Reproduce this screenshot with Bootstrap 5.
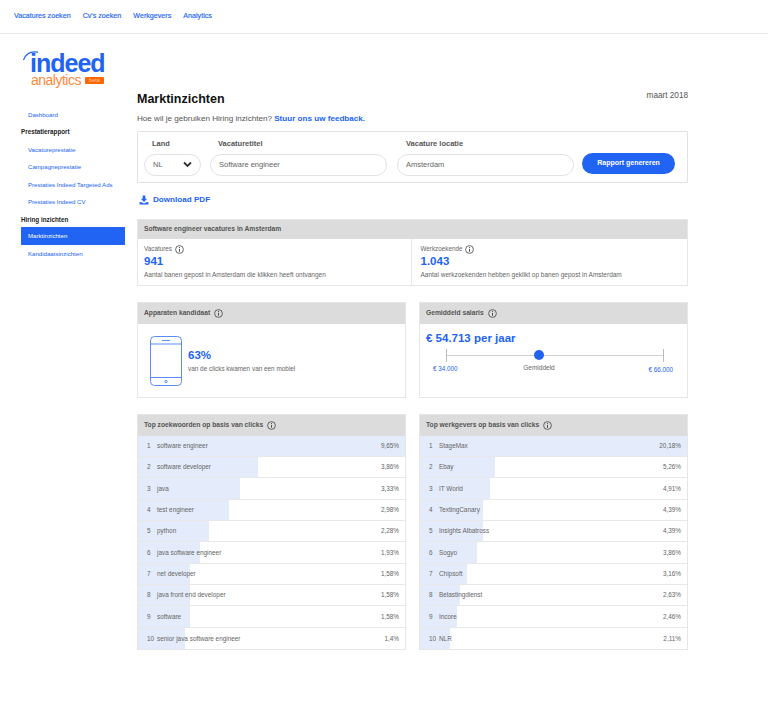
<!DOCTYPE html>
<html lang="nl">
<head>
<meta charset="utf-8">
<title>Marktinzichten</title>
<link href="https://cdn.jsdelivr.net/npm/bootstrap@5.3.0/dist/css/bootstrap.min.css" rel="stylesheet">
<style>
:root{--ib:#2164f3;}
html,body{height:703px;overflow:hidden}
body{font-family:"Liberation Sans",Arial,sans-serif;background:#fff;color:#555;font-size:7px}
.topbar{height:34px;border-bottom:1px solid #e9e9e9;padding:0 14px;gap:12px;justify-content:flex-start}
.topbar a{font-size:7.15px;color:var(--ib);text-decoration:none;padding:0;-webkit-text-stroke:.15px var(--ib)}
.shell{padding-left:21px;width:688px}
.sidebar{width:104px;flex:none;margin-right:12px}
.logo-area{height:71.75px;padding-left:3px;padding-top:18px}
.logo-mark{position:relative;width:82px;display:block}
.logo-arc{position:absolute;left:-1px;top:-2px}
.logo-word{color:var(--ib);font-size:25px;font-weight:700;line-height:22px;letter-spacing:-1px;padding-left:6px;display:block;height:22px}
.logo-sub{display:flex;align-items:center;gap:4px;padding-left:7px;height:14px;margin-top:-1px}
.logo-an{color:#ff8a3c;font-size:14px;line-height:14px;letter-spacing:-.5px}
.logo-beta{background:#f60;color:#ffc9a3;font-size:5.5px;line-height:7px;width:19px;text-align:center;border-radius:1px;margin-top:1px}
.side-list .list-group-item{border:0;padding:0 7px;height:17.5px;line-height:17.5px;font-size:6.1px;color:var(--ib);background:none;white-space:nowrap;border-radius:0}
.side-list .side-head{padding:0;color:#222;font-weight:700;font-size:6.3px}
.side-list .list-group-item.active{background:var(--ib);color:#fff;height:18px;line-height:18px}
.content{width:551px;flex:none;padding-top:57px}
.ttl-row{height:16px;margin-bottom:6px}
.ttl{font-size:12.5px;font-weight:700;color:#111;margin:0;line-height:16px}
.ttl-date{font-size:8.2px;color:#555;line-height:10px}
.intro{font-size:8.1px;line-height:11px;color:#555;margin:0 0 7px}
.intro a{color:var(--ib);font-weight:700;text-decoration:none}
.filter-box{border:1px solid #e2e2e2;border-radius:1px;height:52px;padding:7px 12px 0 6px;gap:9px;margin-bottom:11px}
.fld-lbl{font-size:7.5px;font-weight:700;color:#555;margin:0 0 5px 8px;line-height:10px;display:block;height:10px}
.fld-land{width:57px;flex:none}
.fld-title{width:177px;flex:none;margin-right:1px}
.fld-loc{width:177px;flex:none;margin-right:-1px}
.fld-loc .fld-lbl{margin-left:9px}
.pill{height:21.500px;border:1px solid #e2e2e2;border-radius:11px;font-size:7.5px;color:#666;padding:0 8px;box-shadow:none;min-height:0;line-height:19.500px}
.form-select.pill{background-size:9px 7px;background-position:right 8px center;padding-right:20px;
background-image:url("data:image/svg+xml,%3csvg xmlns='http://www.w3.org/2000/svg' viewBox='0 0 9 7'%3e%3cpath fill='none' stroke='%23333' stroke-width='1.8' d='M1 1.5l3.5 3.5L8 1.5'/%3e%3c/svg%3e")}
.btn-gen{background:var(--ib);color:#fff;border:0;border-radius:11px;height:21px;width:93px;flex:none;font-size:7px;font-weight:700;padding:0;margin-top:14px}
.dl-row{font-size:8.1px;font-weight:700;color:var(--ib);text-decoration:none;height:12px;line-height:12px;gap:4px;padding-left:2px;margin-bottom:13px}
.panel{border:1px solid #e6e6e6;border-radius:0;overflow:hidden}
.panel .card-header{background:#dcdcdc;border:0;border-radius:0;color:#555;font-weight:700;font-size:6.7px;padding:0 6px;display:flex;align-items:center;gap:4px}
.hd-a{height:19px}
.hd-b{height:21px}
.panel-a{height:67px;margin-bottom:16px}
.stat{flex:1 1 0;padding:4.500px 6px 0;font-size:6.3px;line-height:10px;color:#666}
.stat+.stat{border-left:1px solid #e6e6e6;padding-left:9px}
.stat-num{color:var(--ib);font-size:11.500px;font-weight:700;line-height:13px}
.stat-sub{font-size:6.5px;line-height:9px;margin-top:2px;white-space:nowrap}
.stat-lbl{display:flex;align-items:center;gap:3px;height:11px}
.two-col{gap:13px}
.two-col>.panel{flex:1 1 0;min-width:0}
.panel-b{height:96px;margin-bottom:16px}
.device{padding:12px 12px 0;gap:6px;align-items:center}
.dev-pct{font-size:11.500px;font-weight:700;color:var(--ib);line-height:13px}
.dev-txt{font-size:6.4px;line-height:9px;color:#666;margin-top:2px}
.sal{padding:6px 6px 0}
.sal-big{font-size:11.500px;font-weight:700;color:var(--ib);line-height:16px}
.slider-track{position:relative;height:14px;margin:3px 19.500px 0;width:218px}
.slider-line{position:absolute;left:0;right:0;top:5.500px;height:1.500px;background:#d0d0d0}
.tick{position:absolute;top:0;width:1px;height:13px;background:#bbb}
.dot{position:absolute;left:88px;top:1px;width:10px;height:10px;border-radius:50%;background:var(--ib)}
.sal-labels{font-size:6.3px;line-height:9px;color:var(--ib);padding:1px 8px 0 7px}
.sal-labels .mid{color:#666;margin-top:-1px;margin-right:28px;font-size:6.5px}
.sal-labels .hi{margin-top:1px}
.panel-c{height:236px}
.rank{list-style:none;margin:0;padding:0}
.rank li{display:flex;align-items:center;height:21.330px;border-bottom:1px solid #e8e8e8;font-size:6.4px;color:#666;padding:0 6px 0 9px;background-image:linear-gradient(#e4ebfa,#e4ebfa);background-repeat:no-repeat}
.rank li:last-child{border-bottom:0}
.r-n{width:10px;flex:none;white-space:nowrap}
.r-t{flex:1;white-space:nowrap}
</style>
</head>
<body>
<nav class="navbar topbar d-flex align-items-center">
  <a class="nav-link" href="#">Vacatures zoeken</a>
  <a class="nav-link" href="#">Cv's zoeken</a>
  <a class="nav-link" href="#">Werkgevers</a>
  <a class="nav-link" href="#">Analytics</a>
</nav>
<div class="d-flex shell">
  <aside class="sidebar">
    <div class="logo-area">
      <span class="logo-mark">
        <svg class="logo-arc" width="20" height="12" viewBox="0 0 20 12"><path d="M.7 9.500C3 4 8 1 14.500 2.200" fill="none" stroke="#2164f3" stroke-width="1.300" stroke-linecap="round"/></svg>
        <span class="logo-word">indeed</span>
        <span class="logo-sub"><span class="logo-an">analytics</span><span class="logo-beta">beta</span></span>
      </span>
    </div>
    <div class="list-group side-list">
      <a class="list-group-item" href="#">Dashboard</a>
      <div class="list-group-item side-head">Prestatierapport</div>
      <a class="list-group-item" href="#">Vacatureprestatie</a>
      <a class="list-group-item" href="#">Campagneprestatie</a>
      <a class="list-group-item" href="#">Prestaties Indeed Targeted Ads</a>
      <a class="list-group-item" href="#">Prestaties Indeed CV</a>
      <div class="list-group-item side-head">Hiring inzichten</div>
      <a class="list-group-item active" href="#">Marktinzichten</a>
      <a class="list-group-item" href="#">Kandidaatsinzichten</a>
    </div>
  </aside>
  <main class="content">
    <div class="d-flex justify-content-between align-items-start ttl-row">
      <h1 class="ttl">Marktinzichten</h1>
      <div class="ttl-date">maart 2018</div>
    </div>
    <p class="intro">Hoe wil je gebruiken Hiring inzichten? <a href="#">Stuur ons uw feedback.</a></p>
    <div class="d-flex filter-box">
      <div class="fld-land"><label class="fld-lbl">Land</label>
        <select class="form-select pill"><option>NL</option></select></div>
      <div class="fld-title"><label class="fld-lbl">Vacaturetitel</label>
        <input class="form-control pill" value="Software engineer"></div>
      <div class="fld-loc"><label class="fld-lbl">Vacature locatie</label>
        <input class="form-control pill" value="Amsterdam"></div>
      <button class="btn btn-gen" type="button">Rapport genereren</button>
    </div>
    <a class="d-flex align-items-center dl-row" href="#">
      <svg width="10" height="10" viewBox="0 0 10 10"><path fill="#2164f3" d="M3.700 0.500h2.600v3.300h1.900L5 7 1.800 3.800h1.900zM0.500 7.300h2.200L5 8.600l2.300-1.300h2.200v2.200H.5z"/></svg>
      Download PDF
    </a>
    <section class="card panel panel-a">
      <div class="card-header hd-a">Software engineer vacatures in Amsterdam</div>
      <div class="d-flex flex-grow-1">
        <div class="stat">
          <div class="stat-lbl">Vacatures <svg width="9" height="9" viewBox="0 0 9 9"><circle cx="4.500" cy="4.500" r="3.900" fill="none" stroke="#444" stroke-width=".8"/><path d="M4.500 2v1M4.500 3.800v3" stroke="#444" stroke-width=".9"/></svg></div>
          <div class="stat-num">941</div>
          <div class="stat-sub">Aantal banen gepost in Amsterdam die klikken heeft ontvangen</div>
        </div>
        <div class="stat">
          <div class="stat-lbl">Werkzoekende <svg width="9" height="9" viewBox="0 0 9 9"><circle cx="4.500" cy="4.500" r="3.900" fill="none" stroke="#444" stroke-width=".8"/><path d="M4.500 2v1M4.500 3.800v3" stroke="#444" stroke-width=".9"/></svg></div>
          <div class="stat-num">1.043</div>
          <div class="stat-sub">Aantal werkzoekenden hebben geklikt op banen gepost in Amsterdam</div>
        </div>
      </div>
    </section>
    <div class="d-flex two-col">
      <section class="card panel panel-b">
        <div class="card-header hd-b">Apparaten kandidaat <svg width="9" height="9" viewBox="0 0 9 9"><circle cx="4.500" cy="4.500" r="3.900" fill="none" stroke="#444" stroke-width=".8"/><path d="M4.500 2v1M4.500 3.800v3" stroke="#444" stroke-width=".9"/></svg></div>
        <div class="d-flex device">
          <svg width="32" height="50" viewBox="0 0 32 50" fill="none" stroke="#5a8cf5" stroke-width="1"><rect x=".5" y=".5" width="31" height="49" rx="4"/><path d="M.5 8h31M.5 41.500h31M12 4.500h8"/><circle cx="16" cy="45.500" r="1.200"/></svg>
          <div><div class="dev-pct">63%</div><div class="dev-txt">van de clicks kwamen van een mobiel</div></div>
        </div>
      </section>
      <section class="card panel panel-b">
        <div class="card-header hd-b">Gemiddeld salaris <svg width="9" height="9" viewBox="0 0 9 9"><circle cx="4.500" cy="4.500" r="3.900" fill="none" stroke="#444" stroke-width=".8"/><path d="M4.500 2v1M4.500 3.800v3" stroke="#444" stroke-width=".9"/></svg></div>
        <div class="sal">
          <div class="sal-big">€ 54.713 per jaar</div>
          <div class="slider-track"><span class="slider-line"></span><span class="tick" style="left:0"></span><span class="tick" style="left:217px"></span><span class="dot"></span></div>
          <div class="d-flex justify-content-between align-items-start sal-labels"><span>€ 34.000</span><span class="mid">Gemiddeld</span><span class="hi">€ 66.000</span></div>
        </div>
      </section>
    </div>
    <div class="d-flex two-col">
      <section class="card panel panel-c">
        <div class="card-header hd-b">Top zoekwoorden op basis van clicks <svg width="9" height="9" viewBox="0 0 9 9"><circle cx="4.500" cy="4.500" r="3.900" fill="none" stroke="#444" stroke-width=".8"/><path d="M4.500 2v1M4.500 3.800v3" stroke="#444" stroke-width=".9"/></svg></div>
        <ul class="rank">
          <li style="background-size:269px 100%"><span class="r-n">1</span><span class="r-t">software engineer</span><span>9,65%</span></li>
          <li style="background-size:120px 100%"><span class="r-n">2</span><span class="r-t">software developer</span><span>3,86%</span></li>
          <li style="background-size:102px 100%"><span class="r-n">3</span><span class="r-t">java</span><span>3,33%</span></li>
          <li style="background-size:91px 100%"><span class="r-n">4</span><span class="r-t">test engineer</span><span>2,98%</span></li>
          <li style="background-size:71px 100%"><span class="r-n">5</span><span class="r-t">python</span><span>2,28%</span></li>
          <li style="background-size:62px 100%"><span class="r-n">6</span><span class="r-t">java software engineer</span><span>1,93%</span></li>
          <li style="background-size:52px 100%"><span class="r-n">7</span><span class="r-t">net developer</span><span>1,58%</span></li>
          <li style="background-size:52px 100%"><span class="r-n">8</span><span class="r-t">java front end developer</span><span>1,58%</span></li>
          <li style="background-size:52px 100%"><span class="r-n">9</span><span class="r-t">software</span><span>1,58%</span></li>
          <li style="background-size:47px 100%"><span class="r-n">10</span><span class="r-t">senior java software engineer</span><span>1,4%</span></li>
        </ul>
      </section>
      <section class="card panel panel-c">
        <div class="card-header hd-b">Top werkgevers op basis van clicks <svg width="9" height="9" viewBox="0 0 9 9"><circle cx="4.500" cy="4.500" r="3.900" fill="none" stroke="#444" stroke-width=".8"/><path d="M4.500 2v1M4.500 3.800v3" stroke="#444" stroke-width=".9"/></svg></div>
        <ul class="rank">
          <li style="background-size:269px 100%"><span class="r-n">1</span><span class="r-t">StageMax</span><span>20,18%</span></li>
          <li style="background-size:75px 100%"><span class="r-n">2</span><span class="r-t">Ebay</span><span>5,26%</span></li>
          <li style="background-size:70px 100%"><span class="r-n">3</span><span class="r-t">IT World</span><span>4,91%</span></li>
          <li style="background-size:63px 100%"><span class="r-n">4</span><span class="r-t">TextingCanary</span><span>4,39%</span></li>
          <li style="background-size:63px 100%"><span class="r-n">5</span><span class="r-t">Insights Albatross</span><span>4,39%</span></li>
          <li style="background-size:57px 100%"><span class="r-n">6</span><span class="r-t">Sogyo</span><span>3,86%</span></li>
          <li style="background-size:47px 100%"><span class="r-n">7</span><span class="r-t">Chipsoft</span><span>3,16%</span></li>
          <li style="background-size:40px 100%"><span class="r-n">8</span><span class="r-t">Belastingdienst</span><span>2,63%</span></li>
          <li style="background-size:37px 100%"><span class="r-n">9</span><span class="r-t">Incore</span><span>2,46%</span></li>
          <li style="background-size:30px 100%"><span class="r-n">10</span><span class="r-t">NLR</span><span>2,11%</span></li>
        </ul>
      </section>
    </div>
  </main>
</div>
<script src="https://cdn.jsdelivr.net/npm/bootstrap@5.3.0/dist/js/bootstrap.bundle.min.js"></script>
</body>
</html>
